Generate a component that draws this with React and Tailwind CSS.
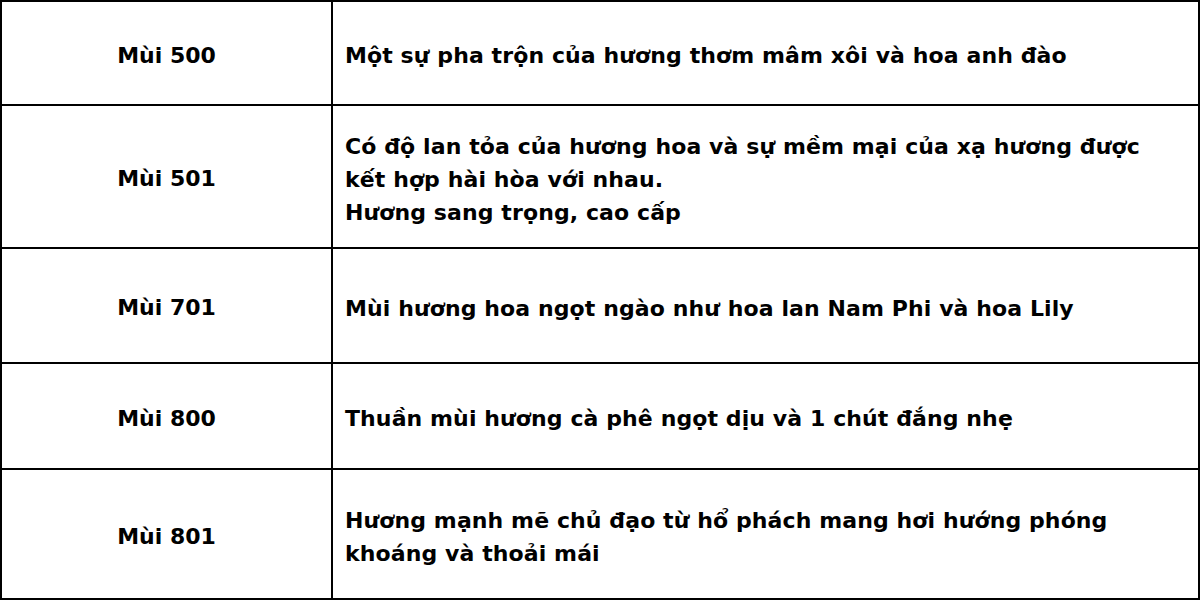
const rows = [
    { name: 'Mùi 500', h: 'h-[102px]', lines: ['Một sự pha trộn của hương thơm mâm xôi và hoa anh đào'] },
    {
        name: 'Mùi 501',
        h: 'h-[141px]',
        lines: [
            'Có độ lan tỏa của hương hoa và sự mềm mại của xạ hương được',
            'kết hợp hài hòa với nhau.',
            'Hương sang trọng, cao cấp'
        ]
    },
    { name: 'Mùi 701', h: 'h-[113px]', lines: ['Mùi hương hoa ngọt ngào như hoa lan Nam Phi và hoa Lily'] },
    { name: 'Mùi 800', h: 'h-[104px]', lines: ['Thuần mùi hương cà phê ngọt dịu và 1 chút đắng nhẹ'] },
    {
        name: 'Mùi 801',
        h: 'h-[128px]',
        lines: ['Hương mạnh mẽ chủ đạo từ hổ phách mang hơi hướng phóng', 'khoáng và thoải mái']
    }
];

const App = () => {
    return (
        <div
            className="w-[1200px] h-[600px] bg-white text-black border-2 border-black flex flex-col"
            style={{ fontFamily: '"DejaVu Sans", "Liberation Sans", sans-serif' }}
        >
            {rows.map((row, i) => (
                <div
                    key={row.name}
                    className={`flex ${i < rows.length - 1 ? 'border-b-2 border-black' : ''}`}
                >
                    {/* Name */}
                    <div className={`w-[331px] ${row.h} border-r-2 border-black flex items-center justify-center pt-[4px] font-bold text-[22px]`}>
                        {row.name}
                    </div>

                    {/* Description */}
                    <div className={`flex-1 ${row.h} flex items-center pl-[12px] pt-[5px] font-bold text-[22px] leading-[33px] tracking-[0.1px] whitespace-nowrap`}>
                        <div>
                            {row.lines.map(line => (
                                <div key={line}>{line}</div>
                            ))}
                        </div>
                    </div>
                </div>
            ))}
        </div>
    );
};

export default App;
